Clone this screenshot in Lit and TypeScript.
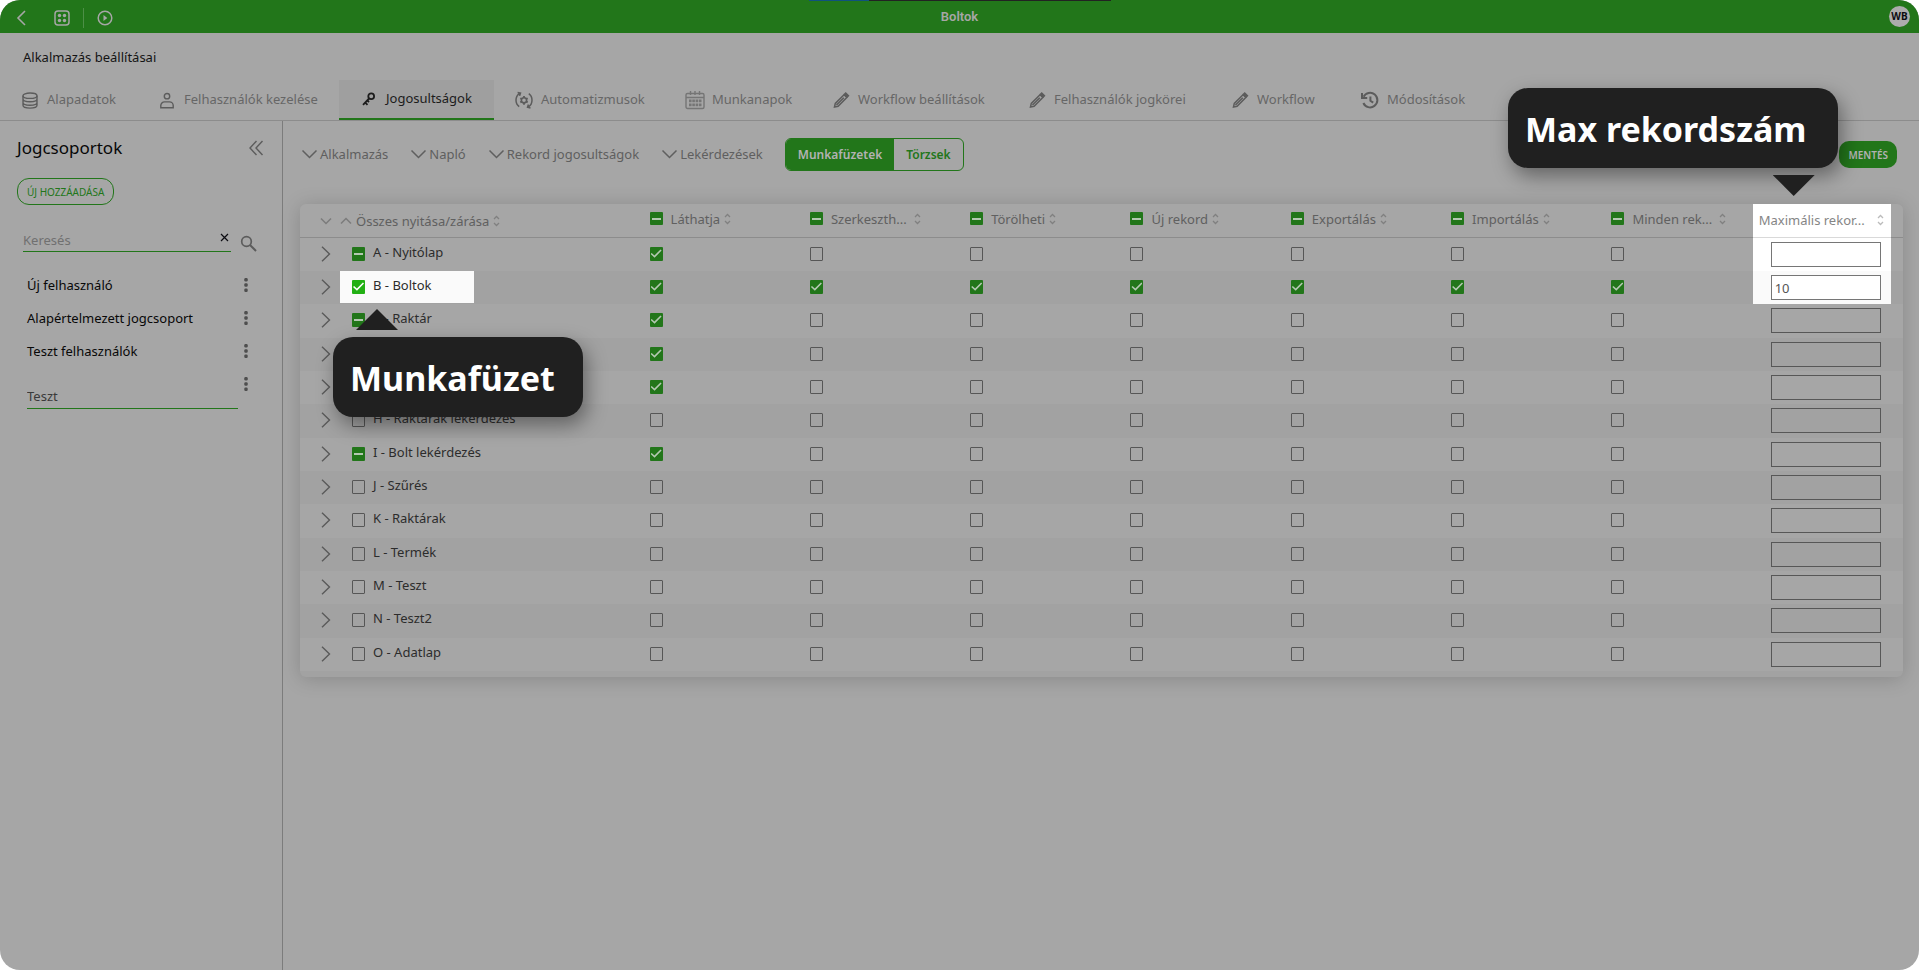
import { LitElement, html, css, svg, nothing } from "lit";
import { customElement, state } from "lit/decorators.js";
import { classMap } from "lit/directives/class-map.js";

type Mark = "on" | "off" | "part";

interface Sheet {
  name: string;
  own: Mark;
  rights: Mark[];
  max: string;
  spot?: boolean;
  maxSpot?: boolean;
}

const RIGHTS = ["Láthatja", "Szerkeszth...", "Törölheti", "Új rekord", "Exportálás", "Importálás", "Minden rek..."];

const only = (first: Mark): Mark[] => [first, "off", "off", "off", "off", "off", "off"];
const all: Mark[] = RIGHTS.map(() => "on" as Mark);

const SHEETS: Sheet[] = [
  { name: "A - Nyitólap", own: "part", rights: only("on"), max: "", maxSpot: true },
  { name: "B - Boltok", own: "on", rights: all, max: "10", spot: true, maxSpot: true },
  { name: "C - Raktár", own: "part", rights: only("on"), max: "" },
  { name: "D - Termékek", own: "part", rights: only("on"), max: "" },
  { name: "E - Készlet", own: "part", rights: only("on"), max: "" },
  { name: "H - Raktárak lekérdezés", own: "off", rights: only("off"), max: "" },
  { name: "I - Bolt lekérdezés", own: "part", rights: only("on"), max: "" },
  { name: "J - Szűrés", own: "off", rights: only("off"), max: "" },
  { name: "K - Raktárak", own: "off", rights: only("off"), max: "" },
  { name: "L - Termék", own: "off", rights: only("off"), max: "" },
  { name: "M - Teszt", own: "off", rights: only("off"), max: "" },
  { name: "N - Teszt2", own: "off", rights: only("off"), max: "" },
  { name: "O - Adatlap", own: "off", rights: only("off"), max: "" },
];

const pencil = svg`<path d="M3.500 17l.8-3.600 8.700-8.700 2.800 2.800-8.700 8.700zM5.500 15l7.300-7.300" stroke-width="1.500"/><path d="M13.400 4.200l1.300-1.200 2.800 2.800-1.300 1.300z" fill="currentColor"/>`;

const ICONS = {
  database: svg`<ellipse cx="10" cy="5.700" rx="7" ry="2.700"/><path d="M3 5.700v9.600c0 1.600 3.100 2.800 7 2.800s7-1.200 7-2.800V5.700M3 9.100c0 1.500 3.100 2.700 7 2.700s7-1.200 7-2.700M3 12.500c0 1.500 3.100 2.700 7 2.700s7-1.200 7-2.700"/>`,
  user: svg`<circle cx="10" cy="6.200" r="2.700"/><path d="M3.800 17.800v-2.200c0-2 1.600-3.700 3.700-3.700h5c2.100 0 3.700 1.700 3.700 3.700v2.200z"/>`,
  key: svg`<circle cx="12.200" cy="7.200" r="2.900" stroke-width="1.800"/><path d="M10.100 9.500L4 15.800M6.300 13.600l2.200 2.200M8.500 11.600l1.500 1.500" stroke-width="1.800"/>`,
  auto: svg`<circle cx="10" cy="10.300" r="2.600" stroke-width="1.600"/><path d="M10 6v1.700M10 13v1.700M6.300 8.200l1.400.8M12.300 11.600l1.400.8M6.300 12.400l1.400-.8M12.300 9l1.400-.8" stroke-width="1.800"/><path d="M5.200 16.600C.9 13.700.9 6.500 5.400 3.600M3.600 2.400l2.900.6-.9 2.900M14.800 3.600c4.300 3 4.300 10.200-.2 13.200M16.500 18l-3-.7.9-2.800" stroke-width="1.500"/>`,
  calendar: svg`<g stroke="#757575"><rect x="1" y="3.500" width="18" height="15" rx="1.500"/><path d="M1 7.500h18M5.500 1v4M14.500 1v4M10 1v4"/><path d="M4 10.800h12.500M4 14.800h12.500" stroke-width="2.800" stroke-dasharray="2.600 .7"/></g>`,
  pencil,
  history: svg`<path d="M3.600 6.700A7.300 7.300 0 1 1 3.400 13" stroke-width="2"/><path d="M2 3v5h5.200M10.400 6.500v4.300l2.800 1.900" stroke-width="2"/>`,
};

const TABS: { label: string; icon: keyof typeof ICONS; active?: boolean }[] = [
  { label: "Alapadatok", icon: "database" },
  { label: "Felhasználók kezelése", icon: "user" },
  { label: "Jogosultságok", icon: "key", active: true },
  { label: "Automatizmusok", icon: "auto" },
  { label: "Munkanapok", icon: "calendar" },
  { label: "Workflow beállítások", icon: "pencil" },
  { label: "Felhasználók jogkörei", icon: "pencil" },
  { label: "Workflow", icon: "pencil" },
  { label: "Módosítások", icon: "history" },
];

const base = css`
  * {
    box-sizing: border-box;
  }
  button,
  input {
    font: inherit;
    color: inherit;
    background: none;
    border: 0;
    padding: 0;
    margin: 0;
  }
  svg {
    display: block;
    flex: none;
    fill: none;
    stroke: currentColor;
  }
`;

@customElement("app-topbar")
export class AppTopbar extends LitElement {
  static styles = [
    base,
    css`
      :host {
        display: block;
      }
      .bar {
        position: relative;
        display: grid;
        grid-template-columns: 1fr auto 1fr;
        align-items: center;
        height: 33px;
        background: var(--green);
        color: var(--paper);
      }
      .bar::before {
        content: "";
        position: absolute;
        top: 0;
        left: 50%;
        width: 302px;
        height: 1px;
        margin-left: -151px;
        background: linear-gradient(90deg, #10527e 60px, #222 60px);
      }
      .left {
        display: flex;
        align-items: center;
        padding: 3px 0 0 13px;
      }
      .left button {
        display: flex;
      }
      .apps {
        margin-left: 24px;
      }
      .rule {
        width: 1px;
        height: 20px;
        margin: 0 13px 0 12px;
        background: #4d8f47;
      }
      .title {
        font: 600 13px/20px "Roboto", sans-serif;
      }
      .avatar {
        justify-self: end;
        width: 21px;
        height: 21px;
        margin-right: 9px;
        border-radius: 50%;
        background: #acacac;
        color: #0c0c12;
        font: 700 10px/21px "Noto Sans", sans-serif;
        text-align: center;
      }
    `,
  ];

  render() {
    return html`<header class="bar">
      <div class="left">
        <button aria-label="Vissza">
          <svg width="16" height="16" viewBox="0 0 16 16" stroke-width="1.600"><path d="M12 1L5 8l7 7" /></svg>
        </button>
        <button class="apps" aria-label="Alkalmazások">
          <svg width="18" height="18" viewBox="0 0 18 18" stroke-width="1.500">
            <rect x="2" y="2" width="14" height="14" rx="3" />
            <g fill="currentColor" stroke="none">
              <circle cx="6.500" cy="6.500" r="1.700" /><circle cx="11.500" cy="6.500" r="1.700" />
              <circle cx="6.500" cy="11.500" r="1.700" /><circle cx="11.500" cy="11.500" r="1.700" />
            </g>
          </svg>
        </button>
        <span class="rule"></span>
        <button aria-label="Indítás">
          <svg width="16" height="16" viewBox="0 0 16 16" stroke-width="1.500">
            <circle cx="8" cy="8" r="6.800" /><path d="M6.500 5l3.800 3-3.800 3z" fill="currentColor" stroke="none" />
          </svg>
        </button>
      </div>
      <span class="title">Boltok</span>
      <button class="avatar">WB</button>
    </header>`;
  }
}

@customElement("app-tabs")
export class AppTabs extends LitElement {
  static styles = [
    base,
    css`
      :host {
        display: block;
      }
      .tabs {
        display: grid;
        grid-template-columns: 137px 202px 155px 171px 146px 196px 203px 130px auto;
        justify-content: start;
        height: 41px;
        border-bottom: 1px solid #8c8c8c;
      }
      .tab {
        display: flex;
        align-items: center;
        gap: 7px;
        height: 40px;
        padding-left: 20px;
        color: #666;
        text-decoration: none;
        white-space: nowrap;
      }
      .tab span {
        margin-top: -2px;
      }
      .active {
        background: #9f9f9f;
        border-bottom: 2px solid var(--green);
        color: #1c1c1c;
      }
      svg {
        color: #5c5c5c;
      }
      .active svg {
        color: #1c1c1c;
      }
    `,
  ];

  render() {
    return html`<nav class="tabs">
      ${TABS.map(
        (t) => html`<a href="#" class=${classMap({ tab: true, active: !!t.active })}>
          <svg width="20" height="20" viewBox="0 0 20 20" stroke-width="1.400">${ICONS[t.icon]}</svg>
          <span>${t.label}</span>
        </a>`,
      )}
    </nav>`;
  }
}

@customElement("group-panel")
export class GroupPanel extends LitElement {
  static styles = [
    base,
    css`
      :host {
        display: block;
        width: 283px;
        flex: none;
        border-right: 1px solid #7c7c7c;
        color: #080808;
      }
      .head {
        display: flex;
        align-items: center;
        justify-content: space-between;
        padding: 14px 18px 0 17px;
      }
      h2 {
        margin: 0;
        font-size: 17px;
        line-height: 26px;
        font-weight: 400;
      }
      .collapse {
        color: #5c5c5c;
      }
      .add {
        display: block;
        height: 27px;
        margin: 17px 0 0 17px;
        padding: 0 9px;
        border: 1px solid var(--green);
        border-radius: 12px;
        color: var(--green);
        font-size: 10px;
        line-height: 24px;
      }
      .search {
        display: flex;
        align-items: flex-end;
        gap: 9px;
        padding: 24px 25px 0 23px;
        color: #5c5c5c;
      }
      .field {
        display: flex;
        flex: 1;
        height: 23px;
        border-bottom: 1px solid var(--green);
      }
      .field input {
        flex: 1;
        min-width: 0;
        outline: 0;
      }
      .field input::placeholder {
        color: #707070;
      }
      .clear {
        align-self: flex-start;
        padding: 4px 2px;
        color: #0c0c12;
      }
      ul {
        margin: 0;
        padding: 16px 34px 0 27px;
        list-style: none;
      }
      li {
        display: flex;
        height: 33px;
        align-items: center;
        justify-content: space-between;
      }
      .more {
        color: #4e4e4e;
      }
      .edit {
        align-items: flex-start;
        gap: 6px;
        height: 43px;
        padding-top: 10px;
      }
      .edit input {
        flex: 1;
        min-width: 0;
        height: 32px;
        padding-top: 6px;
        border-bottom: 1px solid var(--green);
        color: #3a3a3a;
        outline: 0;
      }
    `,
  ];

  private more(name: string) {
    return html`<button class="more" aria-label="${name} műveletei">
      <svg width="4" height="14" viewBox="0 0 4 14">
        <g fill="currentColor" stroke="none">
          <rect x=".3" width="3.400" height="3.400" rx="1.200" />
          <rect x=".3" y="5.300" width="3.400" height="3.400" rx="1.200" />
          <rect x=".3" y="10.600" width="3.400" height="3.400" rx="1.200" />
        </g>
      </svg>
    </button>`;
  }

  render() {
    return html`<aside>
      <div class="head">
        <h2>Jogcsoportok</h2>
        <button class="collapse" aria-label="Panel összecsukása">
          <svg width="16" height="16" viewBox="0 0 16 16" stroke-width="1.400"><path d="M8.500 1L2 8l6.500 7M14.500 1L8 8l6.500 7" /></svg>
        </button>
      </div>
      <button class="add">ÚJ HOZZÁADÁSA</button>
      <div class="search">
        <div class="field">
          <input type="text" aria-label="Keresés" placeholder="Keresés" />
          <button class="clear" aria-label="Törlés">
            <svg width="9" height="9" viewBox="0 0 9 9" stroke-width="1.200"><path d="M1 1l7 7M8 1L1 8" /></svg>
          </button>
        </div>
        <button aria-label="Keresés indítása">
          <svg width="17" height="17" viewBox="0 0 17 17" stroke-width="1.700"><circle cx="6.500" cy="6.500" r="4.800" /><path d="M10 10l6 6" stroke-width="2" /></svg>
        </button>
      </div>
      <ul>
        ${["Új felhasználó", "Alapértelmezett jogcsoport", "Teszt felhasználók"].map(
          (g) => html`<li><span>${g}</span>${this.more(g)}</li>`,
        )}
        <li class="edit"><input type="text" aria-label="Jogcsoport neve" .value=${"Teszt"} />${this.more("Teszt")}</li>
      </ul>
    </aside>`;
  }
}

@customElement("rights-table")
export class RightsTable extends LitElement {
  static styles = [
    base,
    css`
      :host {
        display: block;
      }
      .card {
        margin: 33px 16px 0 17px;
        padding-bottom: 6px;
        border-radius: 6px;
        background: var(--stripe);
        box-shadow: 0 2px 20px rgba(0, 0, 0, 0.18);
      }
      table {
        width: 100%;
        table-layout: fixed;
        border-collapse: separate;
        border-spacing: 0;
      }
      .wide {
        width: 20%;
      }
      th,
      td {
        padding: 0;
        text-align: left;
        vertical-align: top;
        font-weight: 400;
        white-space: nowrap;
        background: var(--row);
      }
      tr {
        --row: var(--paper);
      }
      tbody tr {
        height: 33px;
      }
      tbody tr:nth-child(3n) {
        height: 34px;
      }
      tbody tr:nth-child(even) {
        --row: var(--stripe);
      }
      th {
        height: 34px;
        border-bottom: 1px solid #8c8c8c;
        color: #606060;
      }
      th:first-child {
        border-top-left-radius: 6px;
      }
      th:last-child {
        border-top-right-radius: 6px;
      }
      .head {
        display: flex;
        align-items: center;
        height: 33px;
        line-height: 20px;
      }
      .all {
        padding-left: 16px;
      }
      .all button {
        display: flex;
        width: 20px;
        justify-content: center;
        color: #7c7c7c;
      }
      .right {
        padding: 0 0 4px 29px;
      }
      .right label {
        display: flex;
        align-items: center;
        gap: 8px;
      }
      .sort {
        margin-left: 4px;
        color: #808080;
      }
      .pushed {
        margin-left: 7px;
      }
      .name {
        display: flex;
        align-items: flex-start;
      }
      .expand {
        width: 40px;
        padding: 8px 0 0 21px;
        color: #5a5a5a;
      }
      .label {
        position: relative;
        min-width: 134px;
        height: 32px;
        padding: 9px 12px 0 12px;
        color: #2c2c2c;
      }
      .label label {
        display: flex;
        gap: 8px;
        line-height: 14px;
      }
      .label label span {
        margin-top: -2px;
      }
      input[type="checkbox"] {
        appearance: none;
        flex: none;
        display: block;
        position: relative;
        width: 13px;
        height: 14px;
        border: 1px solid #565656;
        border-radius: 1px;
      }
      th input[type="checkbox"] {
        height: 13px;
      }
      input[type="checkbox"]:checked,
      input[type="checkbox"]:indeterminate {
        border: 0;
        background: var(--green);
      }
      input:checked::before {
        content: "";
        position: absolute;
        inset: 2px 1px 3px 1px;
        background: var(--tick);
        clip-path: polygon(0 55%, 10% 44%, 35% 72%, 90% 6%, 100% 17%, 36% 98%);
      }
      input:indeterminate::before {
        content: "";
        position: absolute;
        left: 2px;
        right: 2px;
        top: 6px;
        height: 2px;
        background: var(--tick);
      }
      .tick {
        padding: 9px 0 0 29px;
      }
      .max {
        height: 33px;
        margin: 0 12px 0 10px;
        padding: 4px 10px 0 18px;
      }
      .max input {
        display: block;
        width: 100%;
        height: 25px;
        padding: 0 3px;
        border: 1px solid #575757;
        border-radius: 0;
        color: #555;
      }
      .spot {
        --paper: #fff;
        --stripe: #fafafa;
        --green: #22b014;
        --tick: #fff;
        background: #fff;
      }
      .soft {
        background: #fafafa;
      }
      .max.spot input {
        border-color: #767676;
        background: #fff;
      }
      .max-head {
        position: relative;
        display: flex;
        align-items: center;
        justify-content: space-between;
        height: 34px;
        margin: 0 12px -1px 10px;
        padding: 0 7px 2px 6px;
        border-bottom: 1px solid #d9d9d9;
        color: #858585;
      }
      .max-head .sort {
        color: #bbb;
      }
      .callout {
        position: absolute;
        z-index: 3;
        height: 80px;
        padding-left: 17px;
        border-radius: 20px;
        background: #202020;
        box-shadow: 4px 8px 20px rgba(0, 0, 0, 0.4);
        color: #fff;
        font-size: 34px;
        font-weight: 700;
        line-height: 82px;
        white-space: nowrap;
      }
      .callout-sheet {
        top: 66px;
        left: -7px;
        width: 250px;
      }
      .callout-max {
        top: -116px;
        right: 53px;
        width: 330px;
      }
      .arrow {
        position: absolute;
        z-index: 4;
        width: 42px;
        height: 21px;
        background: #202020;
      }
      .arrow-up {
        top: 38px;
        left: 16px;
        clip-path: polygon(0 100%, 50% 0, 100% 100%);
      }
      .arrow-down {
        top: -29px;
        left: 20px;
        clip-path: polygon(0 0, 100% 0, 50% 100%);
      }
    `,
  ];

  @state() private sheets = SHEETS;

  private box(mark: Mark, label?: string) {
    return html`<input
      type="checkbox"
      aria-label=${label ?? nothing}
      .checked=${mark === "on"}
      .indeterminate=${mark === "part"}
    />`;
  }

  private sort(pushed = false) {
    return html`<svg class=${classMap({ sort: true, pushed })} width="7" height="12" viewBox="0 0 7 12" stroke-width="1.300">
      <path d="M1 4l2.500-2.500L6 4M1 8l2.500 2.500L6 8" />
    </svg>`;
  }

  render() {
    return html`<div class="card">
      <table>
        <colgroup>
          <col class="wide" />
          ${RIGHTS.map(() => html`<col />`)}
          <col />
        </colgroup>
        <thead>
          <tr>
            <th scope="col">
              <div class="head all">
                <button aria-label="Összes nyitása">
                  <svg width="12" height="8" viewBox="0 0 12 8" stroke-width="1.500"><path d="M1 1.500l5 5 5-5" /></svg>
                </button>
                <button aria-label="Összes zárása">
                  <svg width="12" height="8" viewBox="0 0 12 8" stroke-width="1.500"><path d="M1 6.500l5-5 5 5" /></svg>
                </button>
                <span>Összes nyitása/zárása</span>
                ${this.sort()}
              </div>
            </th>
            ${RIGHTS.map(
              (r) => html`<th scope="col">
                <div class="head right"><label>${this.box("part")}${r}</label>${this.sort(r.endsWith("..."))}</div>
              </th>`,
            )}
            <th scope="col">
              <div class="max-head spot">
                Maximális rekor...${this.sort()}
                <span class="callout callout-max">Max rekordszám</span>
                <span class="arrow arrow-down"></span>
              </div>
            </th>
          </tr>
        </thead>
        <tbody>
          ${this.sheets.map(
            (s) => html`<tr>
              <td>
                <div class="name">
                  <button class="expand" aria-label="${s.name} kibontása">
                    <svg width="10" height="16" viewBox="0 0 10 16" stroke-width="1.400"><path d="M1 .8L8.500 8 1 15.200" /></svg>
                  </button>
                  <div class=${classMap({ label: true, spot: !!s.spot, soft: !!s.spot })}>
                    <label>${this.box(s.own)}<span>${s.name}</span></label>
                    ${s.spot
                      ? html`<span class="callout callout-sheet">Munkafüzet</span><span class="arrow arrow-up"></span>`
                      : nothing}
                  </div>
                </div>
              </td>
              ${s.rights.map((m, i) => html`<td><div class="tick">${this.box(m, `${s.name}: ${RIGHTS[i]}`)}</div></td>`)}
              <td>
                <div class=${classMap({ max: true, spot: !!s.maxSpot, soft: !!s.spot })}>
                  <input type="text" aria-label="${s.name}: maximális rekordszám" .value=${s.max} />
                </div>
              </td>
            </tr>`,
          )}
        </tbody>
      </table>
    </div>`;
  }
}

@customElement("app-root")
export class AppRoot extends LitElement {
  static styles = [
    base,
    css`
      :host {
        --green: #22761a;
        --paper: #a6a6a6;
        --stripe: #a2a2a2;
        --tick: #b4c8b2;
        display: block;
        background: #fff;
        font-family: "Noto Sans", sans-serif;
        font-size: 13px;
        line-height: 18px;
      }
      .window {
        display: flex;
        flex-direction: column;
        min-height: 100vh;
        border-radius: 20px;
        overflow: hidden;
        background: var(--paper);
      }
      h1 {
        margin: 0;
        padding: 14px 23px 13px;
        font-size: 13px;
        line-height: 20px;
        font-weight: 400;
        color: #141414;
      }
      .body {
        display: flex;
        flex: 1;
      }
      main {
        flex: 1;
        min-width: 0;
      }
      .tools {
        display: flex;
        align-items: center;
        gap: 22px;
        padding: 17px 22px 0 18px;
      }
      .drop {
        display: flex;
        align-items: center;
        gap: 2px;
        padding-bottom: 2px;
        color: #5f5f5f;
      }
      .switch {
        display: flex;
        height: 33px;
        border: 1px solid var(--green);
        border-radius: 6px;
        overflow: hidden;
        font-weight: 600;
        font-size: 12px;
      }
      .switch button {
        padding: 0 12px;
        color: var(--green);
      }
      .switch .on {
        background: var(--green);
        color: #b2b2b2;
      }
      .save {
        height: 27px;
        margin-left: auto;
        padding: 0 9px;
        border-radius: 10px;
        background: var(--green);
        color: #b2b2b2;
        font-size: 10px;
        font-weight: 600;
      }
    `,
  ];

  render() {
    return html`<div class="window">
      <app-topbar></app-topbar>
      <h1>Alkalmazás beállításai</h1>
      <app-tabs></app-tabs>
      <div class="body">
        <group-panel></group-panel>
        <main>
          <div class="tools">
            ${["Alkalmazás", "Napló", "Rekord jogosultságok", "Lekérdezések"].map(
              (d) => html`<button class="drop">
                <svg width="17" height="10" viewBox="0 0 17 10" stroke-width="1.500"><path d="M1.500 1.500l7 7 7-7" /></svg>${d}
              </button>`,
            )}
            <div class="switch"><button class="on">Munkafüzetek</button><button>Törzsek</button></div>
            <button class="save">MENTÉS</button>
          </div>
          <rights-table></rights-table>
        </main>
      </div>
    </div>`;
  }
}
